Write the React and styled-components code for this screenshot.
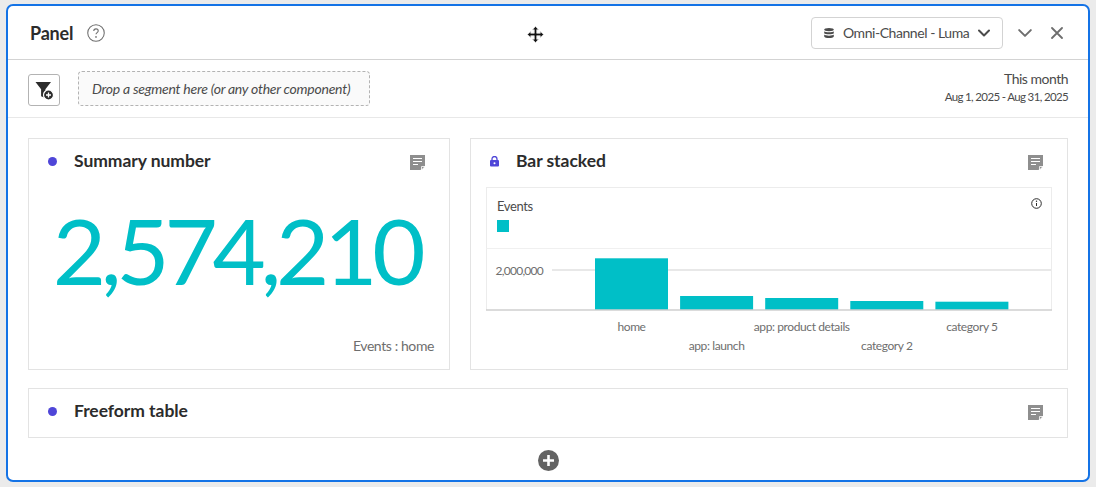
import React from 'react';
import styled, { createGlobalStyle } from 'styled-components';

const FONT = '"Lato", "Open Sans", sans-serif';

const GlobalStyle = createGlobalStyle`
  * { box-sizing: border-box; }
  html, body { margin: 0; padding: 0; background: #ebebeb; }
  body { font-family: ${FONT}; color: #2c2c2c; }
`;

const Page = styled.div`
  width: 1096px;
  height: 487px;
  padding: 4px 6px 5px;
`;

const PanelShell = styled.div`
  position: relative;
  height: 478px;
  background: #fff;
  border: 2px solid #1473e6;
  border-radius: 7px;
  display: flex;
  flex-direction: column;
`;

const Header = styled.header`
  height: 54px;
  flex: none;
  display: flex;
  align-items: center;
  padding: 0 25px 0 22px;
  border-bottom: 1px solid #d3d3d3;
`;

const PanelTitle = styled.h1`
  margin: 0 14px 0 0;
  width: 43px;
  font-size: 18px;
  font-weight: 700;
  letter-spacing: -0.2px;
`;

const HeaderActions = styled.div`
  margin-left: auto;
  display: flex;
  align-items: center;
`;

const Picker = styled.div`
  width: 192px;
  height: 32px;
  margin-right: 15px;
  padding: 0 12px;
  display: flex;
  align-items: center;
  border: 1px solid #d3d3d3;
  border-radius: 4px;
  font-size: 14px;
  letter-spacing: -0.45px;
  color: #4b4b4b;
`;

const PickerLabel = styled.span`
  margin-left: 9px;
  flex: 1;
  white-space: nowrap;
`;

const IconButton = styled.span`
  display: flex;
  margin-left: ${p => p.$gap || 0}px;
  color: #6e6e6e;
`;

const MoveHandle = styled.span`
  position: absolute;
  left: 519px;
  top: 20px;
  display: flex;
`;

const Toolbar = styled.div`
  height: 58px;
  flex: none;
  display: flex;
  align-items: center;
  padding: 0 20px 0 20px;
  border-bottom: 1px solid #e8e8e8;
`;

const FilterButton = styled.div`
  width: 32px;
  height: 32px;
  margin: 3px 18px 0 0;
  display: flex;
  align-items: center;
  justify-content: center;
  border: 1px solid #b3b3b3;
  border-radius: 3px;
`;

const DropZone = styled.div`
  width: 292px;
  height: 35px;
  padding-left: 13px;
  display: flex;
  align-items: center;
  background: #fafafa;
  border: 1px dashed #b3b3b3;
  border-radius: 4px;
  font-size: 14px;
  font-style: italic;
  letter-spacing: -0.25px;
  color: #4b4b4b;
`;

const DateRange = styled.div`
  margin-left: auto;
  padding-bottom: 2px;
  text-align: right;
  color: #4b4b4b;
`;

const DateName = styled.div`
  font-size: 14px;
  line-height: 19px;
  letter-spacing: -0.5px;
`;

const DateSpan = styled.div`
  font-size: 11.5px;
  line-height: 18px;
  letter-spacing: -0.65px;
`;

const Content = styled.main`
  flex: 1;
  padding: 20px 20px 0;
  display: flex;
  flex-direction: column;
`;

const CardRow = styled.div`
  display: grid;
  grid-template-columns: 422px 598px;
  gap: 20px;
  margin-bottom: 18px;
`;

const Card = styled.section`
  height: ${p => p.$height}px;
  display: flex;
  flex-direction: column;
  border: 1px solid #e3e3e3;
`;

const CardHeader = styled.div`
  height: 44px;
  flex: none;
  display: flex;
  align-items: center;
  padding: 0 24px 0 19px;
`;

const Dot = styled.span`
  width: 9px;
  height: 9px;
  flex: none;
  border-radius: 50%;
  background: #4f46d8;
  margin-right: 17px;
`;

const LockSlot = styled.span`
  width: 9px;
  flex: none;
  display: flex;
  justify-content: center;
  margin-right: 17px;
`;

const CardTitle = styled.h2`
  margin: 0;
  padding-bottom: 2px;
  flex: 1;
  font-size: 17.5px;
  font-weight: 700;
  letter-spacing: -0.05px;
  color: #2c2c2c;
`;

const NoteSlot = styled.span`
  display: flex;
  margin-top: 3px;
`;

const BigNumber = styled.div`
  margin-top: 12px;
  padding-right: 5px;
  text-align: center;
  font-size: 92px;
  line-height: 110px;
  letter-spacing: -5.3px;
  color: #00bfc7;
  white-space: nowrap;
`;

const Caption = styled.div`
  margin-top: auto;
  padding: 0 15px 15px 0;
  text-align: right;
  font-size: 14px;
  letter-spacing: -0.4px;
  color: #6e6e6e;
`;

const ChartWrap = styled.div`
  margin: 4px 0 0 15px;
  width: 566px;
`;

const ChartHead = styled.div`
  position: relative;
  height: 62px;
  padding: 10px 10px 0;
  border: 1px solid #ececec;
  border-bottom-color: #f0f0f0;
`;

const ChartName = styled.div`
  font-size: 13px;
  line-height: 17px;
  letter-spacing: -0.4px;
  color: #4b4b4b;
`;

const Swatch = styled.div`
  width: 12px;
  height: 12px;
  margin-top: 5px;
  background: #00bfc7;
`;

const InfoIcon = styled.span`
  position: absolute;
  right: 9px;
  top: 10px;
  display: flex;
`;

const PlotText = styled.text`
  font-family: ${FONT};
  font-size: 12px;
  letter-spacing: ${p => p.$spacing}px;
  fill: #6e6e6e;
`;

const AddRow = styled.div`
  margin-top: 12px;
  display: flex;
  justify-content: center;
`;

const AnnotationIcon = () => (
  <NoteSlot>
    <svg width="15" height="15" viewBox="0 0 15 15">
      <path d="M0 0h15v10.5L10.5 15H0z" fill="#8e8e8e" />
      <path d="M3 3.5h9M3 6.5h9M3 9.5h5" stroke="#fff" strokeWidth="1.2" />
      <path d="M11.5 11.5H15L11.5 15z" fill="#8e8e8e" stroke="#fff" strokeWidth="0.8" />
    </svg>
  </NoteSlot>
);

const HelpIcon = () => (
  <svg width="18" height="18" viewBox="0 0 17 17">
    <circle cx="8.5" cy="8.5" r="7.8" fill="none" stroke="#6e6e6e" />
    <path d="M6.4 6.6c0-1.3 1-2 2.1-2s2.1.7 2.1 1.9c0 1.6-2.1 1.6-2.1 3.2" fill="none" stroke="#6e6e6e" />
    <circle cx="8.5" cy="12.2" r=".8" fill="#6e6e6e" />
  </svg>
);

const DatabaseIcon = () => (
  <svg width="10" height="10" viewBox="0 0 10 10">
    <ellipse cx="5" cy="1.6" rx="4.8" ry="1.6" fill="#4b4b4b" />
    <path d="M.2 3.2C1 4.6 9 4.6 9.8 3.2v2C9 6.6 1 6.6.2 5.2z" fill="#4b4b4b" />
    <path d="M.2 6.6C1 8 9 8 9.8 6.6v1.8C9 10.4 1 10.4.2 8.4z" fill="#4b4b4b" />
  </svg>
);

const Chevron = ({ width = 12, weight = 2, color = '#4b4b4b' }) => (
  <svg width={width} height={width} viewBox="0 0 12 12">
    <path d="M1 3.5l5 5 5-5" fill="none" stroke={color} strokeWidth={weight} strokeLinecap="round" strokeLinejoin="round" />
  </svg>
);

const CloseIcon = () => (
  <svg width="12" height="12" viewBox="0 0 12 12">
    <path d="M1 1l10 10M11 1L1 11" stroke="#6e6e6e" strokeWidth="1.8" strokeLinecap="round" />
  </svg>
);

const MoveCursor = () => (
  <svg width="17" height="17" viewBox="-.5 -.5 17 17">
    <path d="M8 0l3 3.2H9.2v3.6h3.6V5L16 8l-3.2 3V9.2H9.2v3.6H11L8 16l-3-3.2h1.8V9.2H3.2V11L0 8l3.2-3v1.8h3.6V3.2H5z" fill="#111" stroke="#d8d8d8" strokeWidth=".7" />
  </svg>
);

const FilterAddIcon = () => (
  <svg width="24" height="24" viewBox="0 0 24 24">
    <path d="M3.5 4h15.5l-5.6 7.2V20l-4.3-1.8v-7z" fill="#2c2c2c" />
    <circle cx="16.5" cy="17" r="5" fill="#2c2c2c" stroke="#fff" strokeWidth="1.2" />
    <path d="M16.5 14.5v5M14 17h5" stroke="#fff" strokeWidth="1.3" />
  </svg>
);

const LockIcon = () => (
  <svg width="9" height="11" viewBox="0 0 9 11">
    <path d="M2 4.5V3a2.5 2.5 0 0 1 5 0v1.5" fill="none" stroke="#4f46d8" strokeWidth="1.3" />
    <rect x="0" y="4" width="9" height="6.5" rx="1" fill="#4f46d8" />
    <circle cx="4.5" cy="7.2" r="1" fill="#fff" />
  </svg>
);

const InfoGlyph = () => (
  <svg width="11" height="11" viewBox="0 0 11 11">
    <circle cx="5.5" cy="5.5" r="4.8" fill="none" stroke="#2c2c2c" />
    <path d="M5.5 5v3" stroke="#2c2c2c" />
    <circle cx="5.5" cy="3.2" r=".7" fill="#2c2c2c" />
  </svg>
);

const AddIcon = () => (
  <svg width="21" height="21" viewBox="0 0 21 21">
    <circle cx="10.5" cy="10.5" r="10.5" fill="#636363" />
    <path d="M10.5 5v11M5 10.5h11" stroke="#fff" strokeWidth="2.6" />
  </svg>
);

const bars = [
  { label: 'home', top: 9.3, row: 0 },
  { label: 'app: launch', top: 47, row: 1 },
  { label: 'app: product details', top: 49, row: 0 },
  { label: 'category 2', top: 52, row: 1 },
  { label: 'category 5', top: 52.7, row: 0 },
];

function BarChart() {
  return (
    <ChartWrap>
      <ChartHead>
        <ChartName>Events</ChartName>
        <Swatch />
        <InfoIcon><InfoGlyph /></InfoIcon>
      </ChartHead>
      <svg width="566" height="112" viewBox="0 0 566 112" style={{ display: 'block' }}>
        <path d="M.5 0v61M565.5 0v61" stroke="#ececec" />
        <path d="M66 21h499" stroke="#e8e8e8" strokeWidth="2" />
        <PlotText x="57" y="26" textAnchor="end" $spacing={-0.75}>2,000,000</PlotText>
        {bars.map((bar, i) => (
          <rect key={bar.label} x={109 + i * 85.1} y={bar.top} width="73" height={61 - bar.top} fill="#00bfc7" />
        ))}
        <path d="M0 61h566" stroke="#cfcfcf" strokeWidth="1.5" />
        {bars.map((bar, i) => (
          <PlotText key={bar.label} x={145.5 + i * 85.1} y={bar.row ? 101 : 82} textAnchor="middle" $spacing={-0.4}>{bar.label}</PlotText>
        ))}
      </svg>
    </ChartWrap>
  );
}

export default function App() {
  return (
    <Page>
      <GlobalStyle />
      <PanelShell>
        <Header>
          <PanelTitle>Panel</PanelTitle>
          <HelpIcon />
          <HeaderActions>
            <Picker>
              <DatabaseIcon />
              <PickerLabel>Omni-Channel - Luma</PickerLabel>
              <Chevron />
            </Picker>
            <IconButton><Chevron width={14} weight={1.7} color="#6e6e6e" /></IconButton>
            <IconButton $gap={19}><CloseIcon /></IconButton>
          </HeaderActions>
        </Header>
        <MoveHandle><MoveCursor /></MoveHandle>
        <Toolbar>
          <FilterButton><FilterAddIcon /></FilterButton>
          <DropZone>Drop a segment here (or any other component)</DropZone>
          <DateRange>
            <DateName>This month</DateName>
            <DateSpan>Aug 1, 2025 - Aug 31, 2025</DateSpan>
          </DateRange>
        </Toolbar>
        <Content>
          <CardRow>
            <Card $height={232}>
              <CardHeader>
                <Dot />
                <CardTitle>Summary number</CardTitle>
                <AnnotationIcon />
              </CardHeader>
              <BigNumber>2,574,210</BigNumber>
              <Caption>Events : home</Caption>
            </Card>
            <Card $height={232}>
              <CardHeader>
                <LockSlot><LockIcon /></LockSlot>
                <CardTitle>Bar stacked</CardTitle>
                <AnnotationIcon />
              </CardHeader>
              <BarChart />
            </Card>
          </CardRow>
          <Card $height={50}>
            <CardHeader>
              <Dot />
              <CardTitle>Freeform table</CardTitle>
              <AnnotationIcon />
            </CardHeader>
          </Card>
          <AddRow><AddIcon /></AddRow>
        </Content>
      </PanelShell>
    </Page>
  );
}
